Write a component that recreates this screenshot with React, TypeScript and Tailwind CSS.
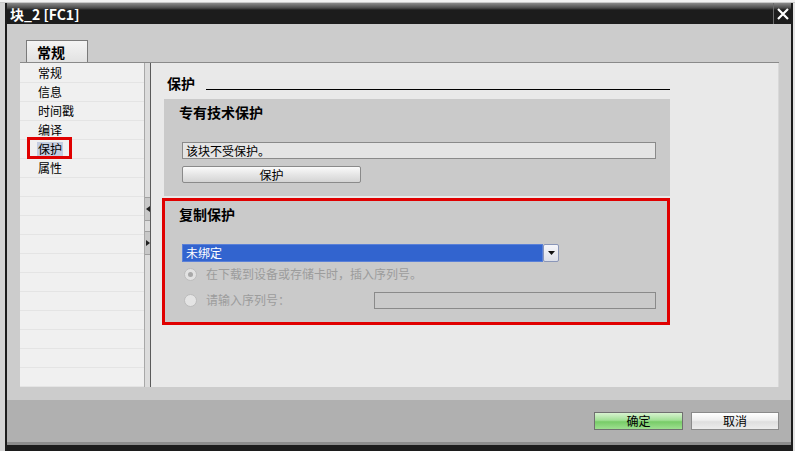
import React from "react";

const navItems = ["常规", "信息", "时间戳", "编译", "保护", "属性"];

export default function App() {
  const rows = Array.from({ length: 17 }, (_, i) => i);
  return (
    <div className="w-[795px] h-[451px] overflow-hidden bg-[#d6d6d6] font-['Noto_Sans_CJK_SC',sans-serif] flex flex-col text-black">
      <div className="h-[3px] shrink-0 bg-[#f2f2f2] border-b border-[#c8c8c8]" />
      <div className="flex flex-1 min-h-0">
        <div className="w-[5px] bg-[#d4d4d4]" />
        <div className="w-[788px] flex flex-col border-l-2 border-r-2 border-[#1c1c1c] bg-[#cccccc]">
          {/* Title bar */}
          <div className="h-[21px] shrink-0 flex items-stretch bg-[linear-gradient(to_bottom,#8a8a8a_0px,#4a4a4a_5px,#1c1c1c_7px)]">
            <div className="flex-1 pl-[3px] flex items-center text-white font-bold text-[14px] leading-[16px]">
              块_2 [FC1]
            </div>
            <div className="w-[18px] border-l border-[#6a6a6a] flex items-center justify-center">
              <svg width="12" height="12" viewBox="0 0 12 12">
                <path d="M1 1 L11 11 M11 1 L1 11" stroke="white" strokeWidth="2.2" />
              </svg>
            </div>
          </div>

          {/* Body */}
          <div className="h-[376px] shrink-0 flex flex-col pt-[16px]">
            <div className="flex pl-[19px]">
              <div className="w-[62px] h-[22px] border border-b-0 border-[#7a7a7a] bg-[linear-gradient(to_bottom,#f4f4f4,#e2e2e2)] pl-[10px] flex items-center font-bold text-[14px] leading-[16px]">
                常规
              </div>
            </div>
            <div className="ml-[13px] w-[759px] h-[325px] border-t border-[#8a8a8a] flex">
              {/* Nav */}
              <div className="w-[124px] bg-[#f0f0f0] pt-[1px] flex flex-col overflow-hidden">
                {rows.map((i) => {
                  const label = navItems[i];
                  const selected = label === "保护";
                  return (
                    <div
                      key={i}
                      className="relative h-[19px] shrink-0 border-b border-[#e4e4e4] pl-[17px] flex items-center text-[12px] leading-[14px]"
                    >
                      {label && (
                        <span className={selected ? "bg-[#c4cde0] px-px" : "px-px"}>{label}</span>
                      )}
                      {selected && (
                        <div className="absolute left-[7px] top-[-3px] w-[45px] h-[22px] border-[3px] border-[#e00000]" />
                      )}
                    </div>
                  );
                })}
              </div>
              {/* Splitter */}
              <div className="w-[7px] bg-[#dcdcdc] border-l border-[#a8a8a8] border-r border-r-[#5a5a5a] flex flex-col">
                <div className="h-[134px]" />
                <div className="h-[24px] bg-[#c8c8c8] border-y border-[#a0a0a0] flex items-center justify-center">
                  <svg width="4" height="6" viewBox="0 0 4 6">
                    <path d="M4 0 L0 3 L4 6 Z" fill="#222" />
                  </svg>
                </div>
                <div className="h-[10px]" />
                <div className="h-[24px] bg-[#c8c8c8] border-y border-[#a0a0a0] flex items-center justify-center">
                  <svg width="4" height="6" viewBox="0 0 4 6">
                    <path d="M0 0 L4 3 L0 6 Z" fill="#222" />
                  </svg>
                </div>
              </div>
              {/* Content */}
              <div className="flex-1 bg-[#e9e9e9] border-r border-[#d8d8d8]">
                <div className="ml-[13px] w-[506px] flex flex-col">
                  {/* Heading */}
                  <div className="mt-[12px] h-[16px] flex items-stretch">
                    <div className="pl-[3px] font-bold text-[14px] leading-[16px]">保护</div>
                    <div className="flex-1 ml-[11px] border-b border-black mb-[1px]" />
                  </div>

                  {/* Section 1 */}
                  <div className="mt-[8px] bg-[#cacaca] pt-[4px] pb-[13px] flex flex-col">
                    <div className="pl-[15px] font-bold text-[14px] leading-[18px]">专有技术保护</div>
                    <div className="mt-[21px] ml-[18px] w-[474px] h-[17px] bg-[#e4e4e4] border border-[#8a8a8a] pl-[3px] flex items-center text-[12px] leading-[14px]">
                      该块不受保护。
                    </div>
                    <div className="mt-[7px] ml-[18px] w-[179px] h-[17px] border border-[#8a8a8a] rounded-[2px] bg-[linear-gradient(to_bottom,#fafafa,#e6e6e6_50%,#d4d4d4)] flex items-center justify-center text-[12px] leading-[14px]">
                      保护
                    </div>
                  </div>

                  {/* Section 2 */}
                  <div className="mt-[2px] -ml-[2px] w-[508px] h-[127px] border-[3px] border-[#e00000] bg-[#cacaca] pt-[4px] flex flex-col">
                    <div className="pl-[14px] font-bold text-[14px] leading-[18px]">复制保护</div>
                    <div className="mt-[21px] ml-[17px] w-[377px] h-[18px] flex">
                      <div className="flex-1 bg-[#3264cf] border border-[#5a80d8] pl-[3px] flex items-center text-white text-[12px] leading-[14px]">
                        未绑定
                      </div>
                      <div className="w-[16px] border border-[#8a96b8] rounded-[2px] bg-[linear-gradient(to_bottom,#f6f6fa,#dcdfe8)] flex items-center justify-center">
                        <svg width="7" height="4" viewBox="0 0 7 4">
                          <path d="M0 0 L7 0 L3.5 4 Z" fill="#111" />
                        </svg>
                      </div>
                    </div>
                    <div className="mt-[2px] ml-[19px] h-[20px] flex items-center text-[12px] leading-[14px] text-[#9c9c9c]">
                      <div className="w-[13px] h-[13px] rounded-full border border-[#bcbcbc] bg-[#e2e2e2] flex items-center justify-center">
                        <div className="w-[5px] h-[5px] rounded-full bg-[#a8a8a8]" />
                      </div>
                      <span className="ml-[9px]">在下载到设备或存储卡时，插入序列号。</span>
                    </div>
                    <div className="mt-[6px] ml-[19px] h-[20px] flex items-center text-[12px] leading-[14px] text-[#9c9c9c]">
                      <div className="w-[13px] h-[13px] rounded-full border border-[#bcbcbc] bg-[#e4e4e4]" />
                      <span className="ml-[9px] w-[168px]">请输入序列号：</span>
                      <div className="w-[282px] h-[17px] border border-[#8a8a8a] bg-[#cacaca]" />
                    </div>
                  </div>
                </div>
              </div>
            </div>
          </div>

          {/* Footer */}
          <div className="h-[42px] shrink-0 bg-[#b0b0b0] flex justify-end items-start pt-[12px] pr-[12px] gap-[8px]">
            <div className="w-[89px] h-[18px] border border-[#707070] bg-[linear-gradient(to_bottom,#d8f2d0,#a2e096_45%,#78cc68_55%,#9ee090)] flex items-center justify-center text-[12px] leading-[14px]">
              确定
            </div>
            <div className="w-[88px] h-[18px] border border-[#8a8a8a] bg-[linear-gradient(to_bottom,#ffffff,#eeeeee_45%,#dedede_55%,#ececec)] flex items-center justify-center text-[12px] leading-[14px]">
              取消
            </div>
          </div>
          <div className="h-[3px] shrink-0 bg-[#8c8c8c]" />
          <div className="h-[6px] shrink-0 bg-[#1c1c1c]" />
        </div>
        <div className="flex-1 bg-[#e4e4e4]" />
      </div>
    </div>
  );
}
